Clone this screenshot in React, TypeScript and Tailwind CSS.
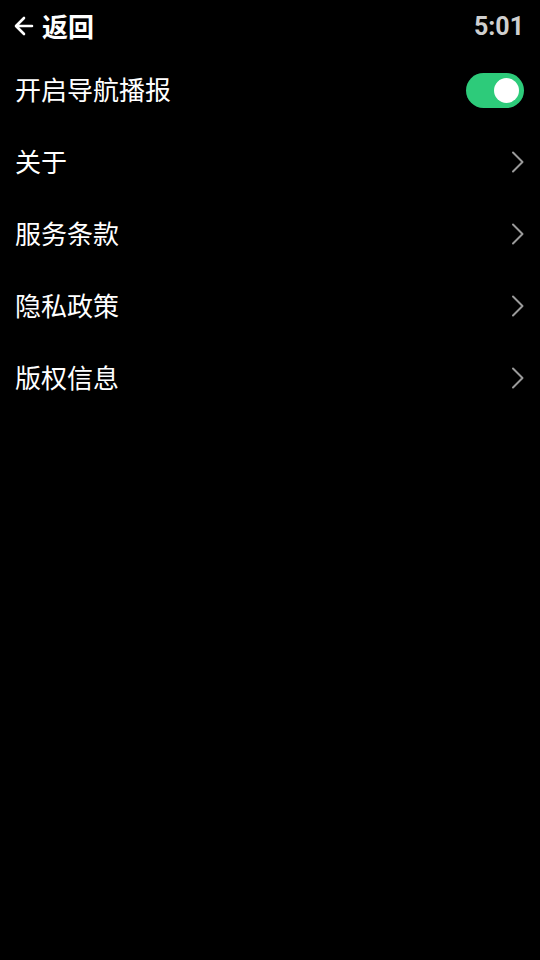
import { useState } from "react";

const ITEMS = ["关于", "服务条款", "隐私政策", "版权信息"];

const FONT = { fontFamily: '"Noto Sans CJK SC", "Noto Sans", sans-serif' };

function Chevron() {
  return (
    <svg width="14" height="22" viewBox="0 0 14 22" fill="none" className="text-[#9a9a9a]">
      <path d="M2 1.5 L11.5 11 L2 20.5" stroke="currentColor" strokeWidth="2" strokeLinecap="round" strokeLinejoin="round" />
    </svg>
  );
}

function BackArrow() {
  return (
    <svg width="20" height="20" viewBox="0 0 20 20" fill="none" className="text-white">
      <path d="M18 10 H2.5 M10 2 L2 10 L10 18" stroke="currentColor" strokeWidth="2.6" strokeLinecap="round" strokeLinejoin="round" />
    </svg>
  );
}

export default function App() {
  const [on, setOn] = useState(true);

  return (
    <div className="flex min-h-[960px] w-[540px] flex-col bg-black text-white" style={FONT}>
      <div className="flex h-[54px] items-center justify-between pb-[2px] pl-[14px] pr-[16px]">
        <div className="flex items-center gap-[8px]">
          <BackArrow />
          <span className="text-[26px] font-bold leading-none">返回</span>
        </div>
        <span className="text-[25px] font-bold leading-none text-[#cfcfcf]" style={{ fontFamily: '"Roboto", "Noto Sans", sans-serif' }}>
          5:01
        </span>
      </div>

      <div className="flex h-[72px] items-center justify-between pl-[15px] pr-[16px]">
        <span className="pb-[3px] text-[26px] leading-none">开启导航播报</span>
        <button
          onClick={() => setOn(!on)}
          className={`flex h-[35px] w-[58px] items-center rounded-full px-[5px] ${on ? "justify-end bg-[#2dcb7a]" : "justify-start bg-[#555]"}`}
        >
          <span className="h-[25px] w-[25px] rounded-full bg-white" />
        </button>
      </div>

      {ITEMS.map((item) => (
        <div key={item} className="flex h-[72px] items-center justify-between pl-[15px] pr-[15px]">
          <span className="pb-[3px] text-[26px] leading-none">{item}</span>
          <Chevron />
        </div>
      ))}
    </div>
  );
}
